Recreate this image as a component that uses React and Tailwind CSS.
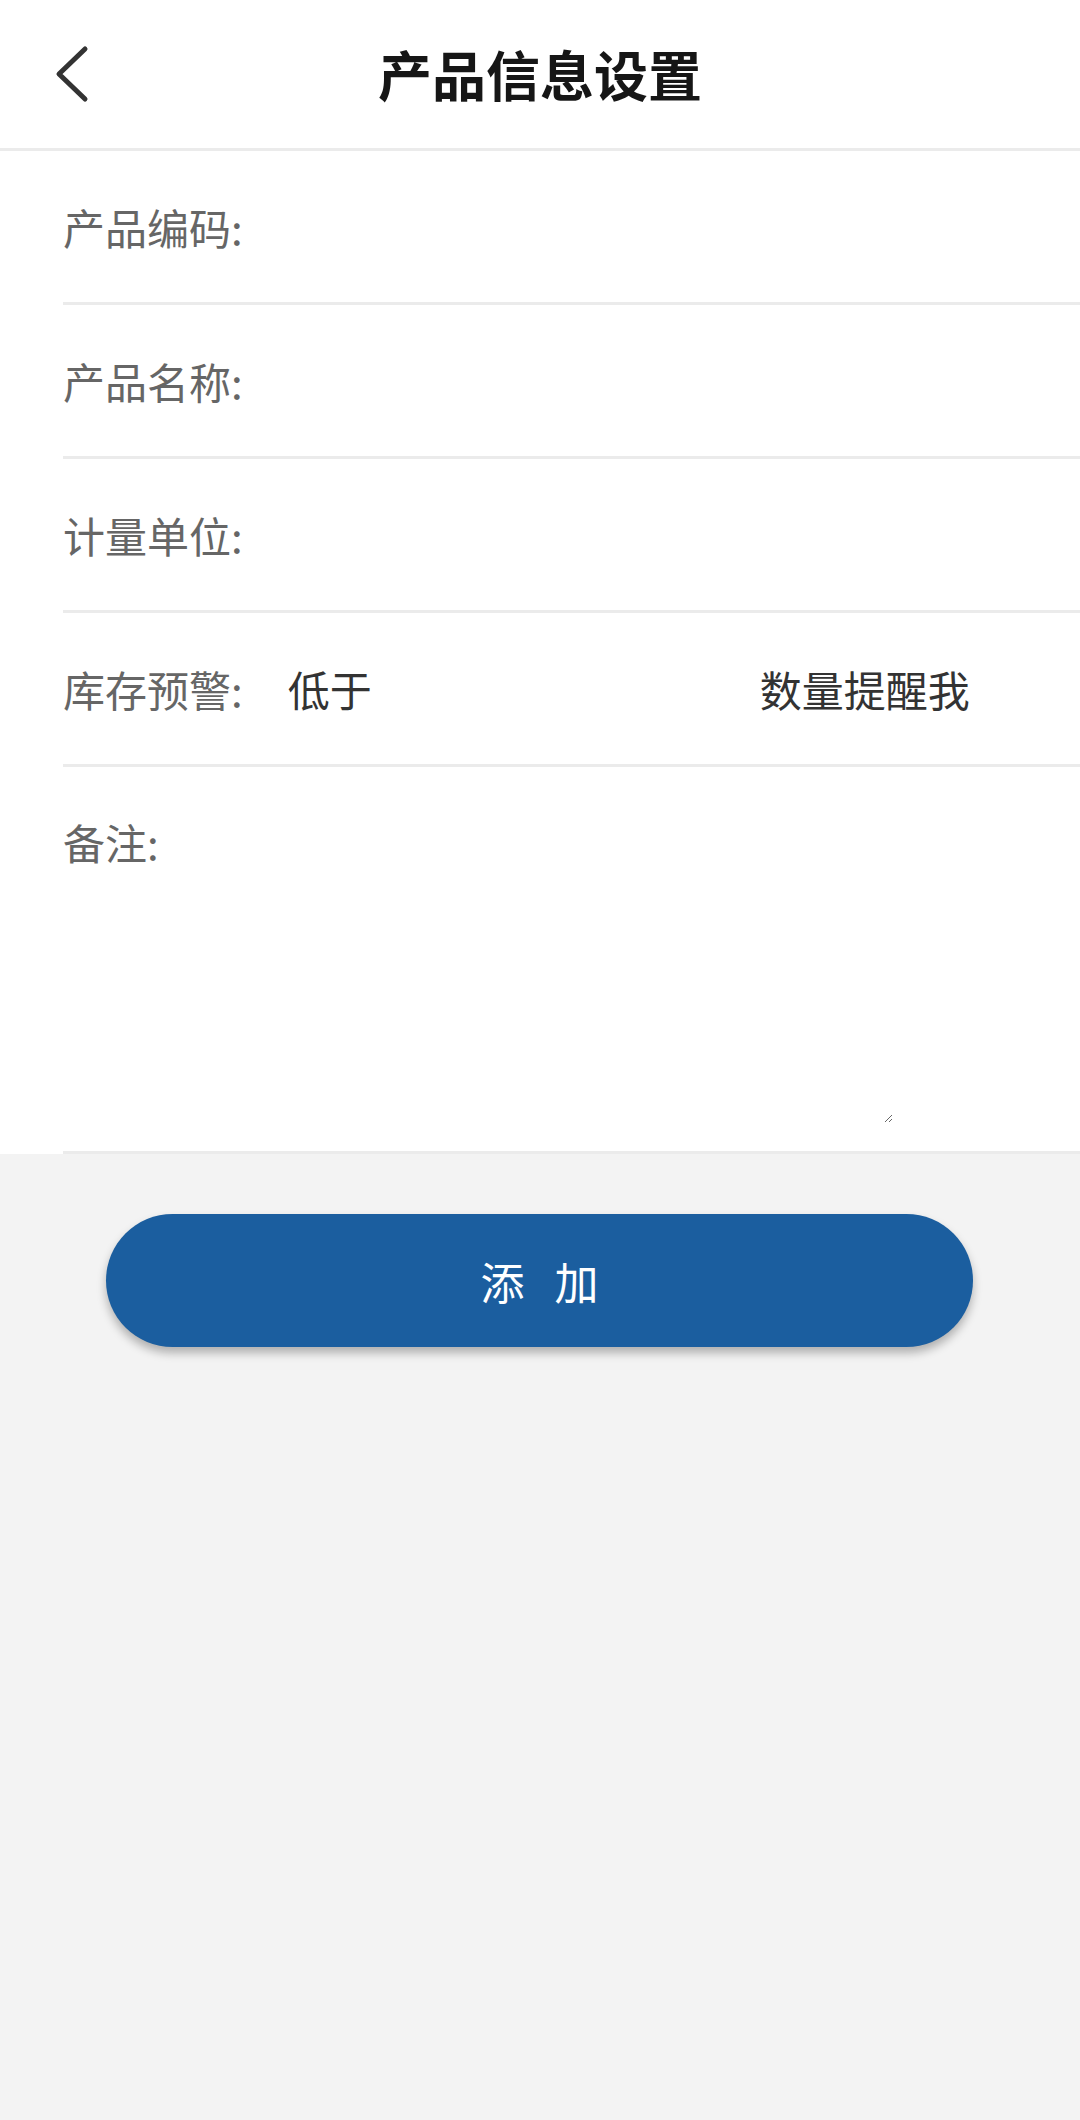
import React from 'react';

const font = "font-['Noto_Sans_CJK_SC','Noto_Sans',sans-serif]";

export default function App() {
  return (
    <div className={`min-h-screen bg-[#f3f3f3] ${font}`}>
      {/* Header */}
      <div className="h-[151px] bg-white border-b-[3px] border-[#ebebeb] grid grid-cols-[1fr_auto_1fr] items-center">
        <button className="pl-[54px] flex items-center">
          <svg width="40" height="58" viewBox="0 0 40 58" fill="none">
            <polyline
              points="31,4 5,29 31,54"
              stroke="#333"
              strokeWidth="5"
              strokeLinecap="round"
              strokeLinejoin="round"
            />
          </svg>
        </button>
        <h1 className="text-[54px] font-bold text-[#161616] leading-none">产品信息设置</h1>
        <div />
      </div>

      {/* Form */}
      <div className="bg-white">
        <Row label="产品编码:" />
        <Row label="产品名称:" />
        <Row label="计量单位:" />
        <div className="ml-[63px] h-[154px] flex items-center border-b-[3px] border-[#ebebeb]">
          <span className="text-[42px] leading-none text-[#666] mr-[45px]">库存预警:</span>
          <span className="text-[42px] leading-none text-[#333]">低于</span>
          <input className="w-[388px] h-[80px] outline-none bg-transparent" />
          <span className="text-[42px] leading-none text-[#333]">数量提醒我</span>
        </div>
        <div className="ml-[63px] h-[387px] flex items-start border-b-[3px] border-[#ebebeb]">
          <span className="mt-[54px] text-[42px] leading-none text-[#666]">备注:</span>
          <textarea className="mt-[34px] ml-[30px] w-[704px] h-[322px] outline-none bg-transparent" />
        </div>
      </div>

      {/* Submit */}
      <div className="pt-[60px] pl-[106px] pr-[107px]">
        <button className="w-full h-[133px] rounded-full bg-[#1b5e9f] shadow-[0_6px_10px_rgba(0,0,0,0.28)] flex items-center justify-center gap-[30px] text-white text-[44px] leading-none">
          <span>添</span>
          <span>加</span>
        </button>
      </div>
    </div>
  );
}

function Row({ label }) {
  return (
    <div className="ml-[63px] h-[154px] flex items-center border-b-[3px] border-[#ebebeb]">
      <span className="text-[42px] leading-none text-[#666]">{label}</span>
      <input className="flex-1 h-[80px] outline-none bg-transparent" />
    </div>
  );
}
